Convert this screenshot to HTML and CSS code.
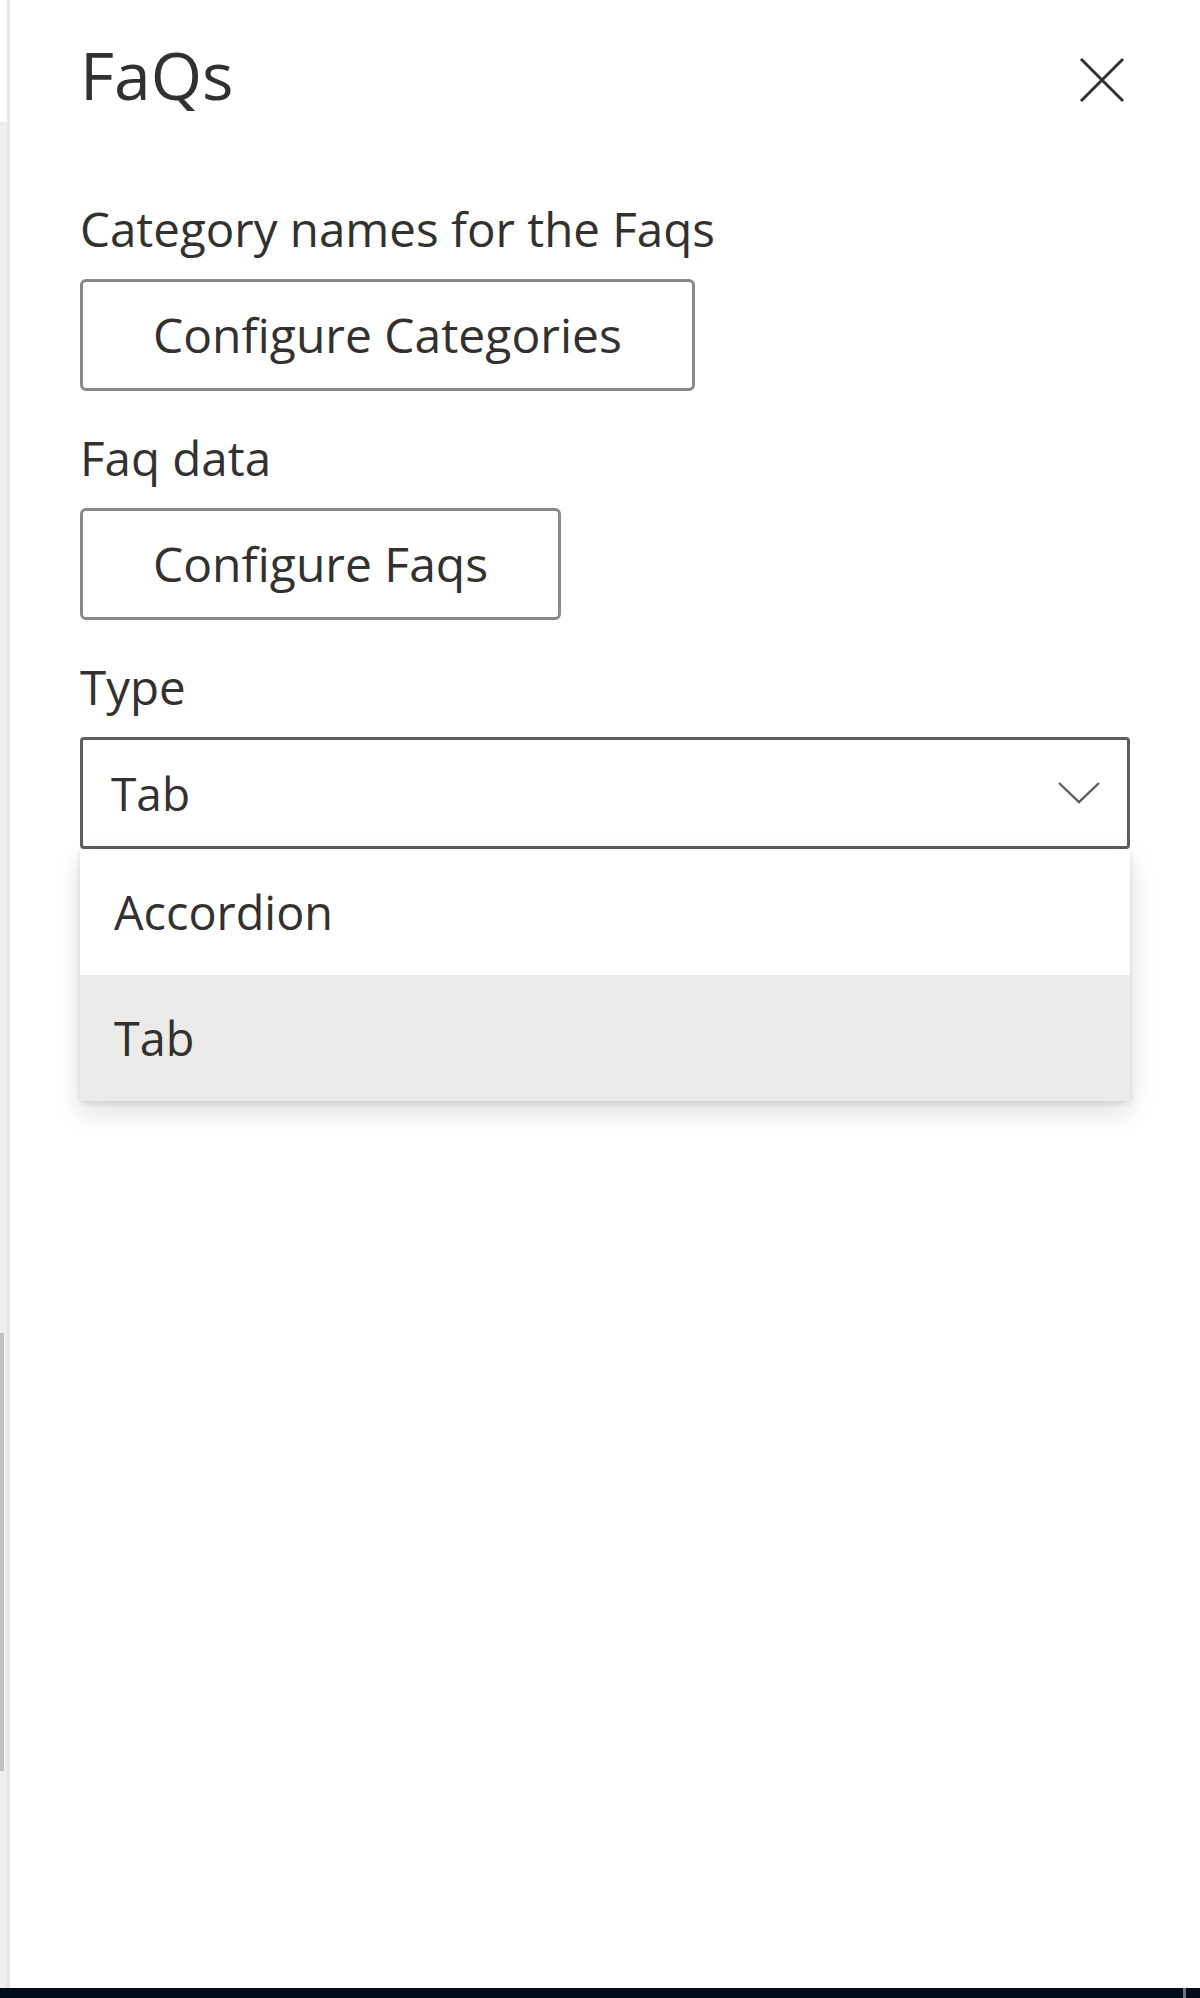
FILE: index.html
```html
<!DOCTYPE html>
<html lang="en">
<head>
<meta charset="utf-8">
<title>FaQs</title>
<link rel="stylesheet" href="styles.css">
</head>
<body>
<div class="app">
  <div class="strip">
    <div class="strip-top"></div>
    <div class="strip-thumb"></div>
  </div>
  <div class="panel">
    <div class="header">
      <h1 class="title">FaQs</h1>
      <svg class="close" width="48" height="48" viewBox="0 0 48 48" aria-label="Close">
        <path d="M3 3 L45 45 M45 3 L3 45" stroke="#323130" stroke-width="3" fill="none"/>
      </svg>
    </div>
    <div class="field">
      <div class="label">Category names for the Faqs</div>
      <button class="btn">Configure Categories</button>
    </div>
    <div class="field">
      <div class="label">Faq data</div>
      <button class="btn">Configure Faqs</button>
    </div>
    <div class="field">
      <div class="label">Type</div>
      <div class="dropdown">
        <div class="select">
          <span class="select-text">Tab</span>
          <svg class="chevron" width="44" height="24" viewBox="0 0 44 24">
            <path d="M2 2 L22 21 L42 2" stroke="#605e5c" stroke-width="2.4" fill="none"/>
          </svg>
        </div>
        <div class="menu">
          <div class="option">Accordion</div>
          <div class="option selected">Tab</div>
        </div>
      </div>
    </div>
  </div>
</div>
<div class="taskbar"><div class="taskbar-mark"></div></div>
</body>
</html>
```
FILE: styles.css
```css
html, body {
  margin: 0;
  padding: 0;
}
body {
  width: 1200px;
  height: 1998px;
  background: #ffffff;
  font-family: "Open Sans", "Noto Sans", sans-serif;
  color: #323130;
  overflow: hidden;
}
.app {
  display: flex;
  height: 1988px;
}
.strip {
  width: 7px;
  flex: 0 0 7px;
  background: #f0f0f0;
  border-right: 3px solid #e6e6e6;
  display: flex;
  flex-direction: column;
}
.strip-top {
  height: 122px;
  background: #ffffff;
  border-bottom: 3px solid #e9e9e9;
}
.strip-thumb {
  margin-top: 1208px;
  width: 4px;
  height: 438px;
  background: #c2c2c2;
}
.panel {
  flex: 1;
  background: #ffffff;
  padding: 29px 70px 0 70px;
}
.header {
  display: flex;
  justify-content: space-between;
  align-items: flex-start;
  height: 90px;
  margin-bottom: 79px;
}
.title {
  margin: 0;
  font-size: 66px;
  line-height: 90px;
  font-weight: 400;
}
.close {
  margin-top: 27px;
  margin-right: 4px;
  display: block;
}
.field {
  margin-bottom: 36px;
}
.label {
  font-size: 47.5px;
  line-height: 62px;
  margin-bottom: 19px;
}
.btn {
  display: block;
  box-sizing: border-box;
  height: 112px;
  padding: 0 70px;
  border: 3px solid #8a8886;
  border-radius: 6px;
  background: #ffffff;
  font-family: "Open Sans", "Noto Sans", sans-serif;
  font-size: 48px;
  line-height: 62px;
  font-weight: 400;
  color: #323130;
}
.dropdown {
  position: relative;
}
.select {
  box-sizing: border-box;
  height: 112px;
  border: 3px solid #605e5c;
  border-radius: 4px;
  display: flex;
  align-items: center;
  justify-content: space-between;
  padding: 0 26px 0 28px;
  font-size: 46px;
  line-height: 62px;
}
.chevron {
  display: block;
}
.menu {
  position: absolute;
  left: 0;
  right: 0;
  top: 112px;
  background: #ffffff;
  box-shadow: 0 11px 25px rgba(0, 0, 0, 0.13), 0 2px 6px rgba(0, 0, 0, 0.11);
}
.option {
  height: 126px;
  display: flex;
  align-items: center;
  padding-left: 34px;
  font-size: 46.8px;
  line-height: 62px;
}
.option.selected {
  background: #edebe9;
}
.taskbar {
  height: 10px;
  background: #020b1a;
  position: relative;
}
.taskbar-mark {
  position: absolute;
  left: 1183px;
  top: 0;
  width: 3px;
  height: 10px;
  background: #6f7080;
}
```
